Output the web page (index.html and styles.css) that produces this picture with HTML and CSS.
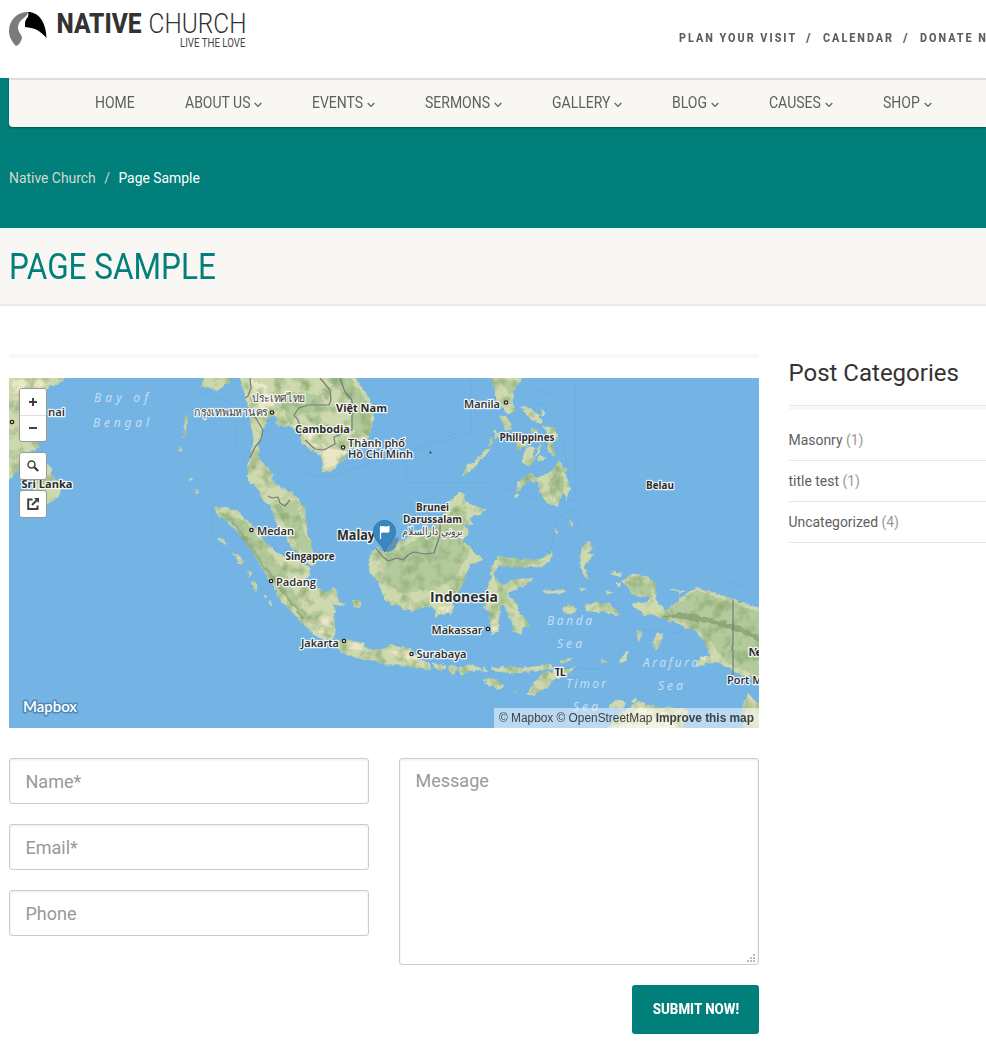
FILE: index.html
```html
<!DOCTYPE html>
<html lang="en">
<head>
<meta charset="utf-8">
<title>Page Sample</title>
<link rel="stylesheet" href="styles.css">
</head>
<body>
<header class="top">
  <svg class="logo" width="240" height="42" viewBox="9 8 240 42" role="img" aria-label="Native Church">
    <path fill="#7b7b7b" d="M28 12C17 12 9 20 9 31c0 6 3 11 7 15 3-1 5-4 6-8 0-3-4-6-4-10 0-5 3-8 7-11 2-2 3-3 3-5z"/>
    <path fill="#000" d="M28 12c10 0 18 9 18.500 26C40 31 36 28 25 27c0-5 0-7 3-10 0-2 1-3 0-5z"/>
    <text class="logo-bold" x="56.500" y="32.500" textLength="85" lengthAdjust="spacingAndGlyphs">NATIVE</text>
    <text class="logo-light" x="148.500" y="32.500" textLength="98" lengthAdjust="spacingAndGlyphs">CHURCH</text>
    <text class="logo-tag" x="180" y="47.300" textLength="65.500" lengthAdjust="spacingAndGlyphs">LIVE THE LOVE</text>
  </svg>
  <nav class="toplinks">
    <a class="tl1"><span>PLAN YOUR VISIT</span></a><i>/</i>
    <a class="tl2"><span>CALENDAR</span></a><i>/</i>
    <a class="tl3"><span>DONATE NOW</span></a>
  </nav>
</header>

<section class="hero">
  <nav class="mainnav">
    <a><span>HOME</span></a>
    <a><span>ABOUT US</span><svg viewBox="0 0 8 6"><path d="M.7 1 4 4.300 7.300 1"/></svg></a>
    <a><span>EVENTS</span><svg viewBox="0 0 8 6"><path d="M.7 1 4 4.300 7.300 1"/></svg></a>
    <a><span>SERMONS</span><svg viewBox="0 0 8 6"><path d="M.7 1 4 4.300 7.300 1"/></svg></a>
    <a><span>GALLERY</span><svg viewBox="0 0 8 6"><path d="M.7 1 4 4.300 7.300 1"/></svg></a>
    <a><span>BLOG</span><svg viewBox="0 0 8 6"><path d="M.7 1 4 4.300 7.300 1"/></svg></a>
    <a><span>CAUSES</span><svg viewBox="0 0 8 6"><path d="M.7 1 4 4.300 7.300 1"/></svg></a>
    <a><span>SHOP</span><svg viewBox="0 0 8 6"><path d="M.7 1 4 4.300 7.300 1"/></svg></a>
  </nav>
  <div class="crumbs"><a>Native Church</a><i>/</i><b>Page Sample</b></div>
</section>

<section class="title"><h1>PAGE SAMPLE</h1></section>

<main class="content">
  <div class="primary">
    <div class="rule"></div>
    <div class="map">
      <svg class="mapart" viewBox="9 378 750 350">
        <defs>
          <filter id="terrain" filterUnits="userSpaceOnUse" x="0" y="370" width="770" height="370" color-interpolation-filters="sRGB">
            <feTurbulence type="fractalNoise" baseFrequency=".18" numOctaves="3" seed="4" result="edge"/>
            <feDisplacementMap in="SourceGraphic" in2="edge" scale="5" xChannelSelector="R" yChannelSelector="G" result="land"/>
            <feTurbulence type="fractalNoise" baseFrequency=".08" numOctaves="4" seed="9"/>
            <feColorMatrix values="0 0 0 0 .52  0 0 0 0 .65  0 0 0 0 .43  2 0 0 0 -.9"/>
            <feComposite in2="land" operator="in" result="s"/>
            <feMerge><feMergeNode in="land"/><feMergeNode in="s"/></feMerge>
          </filter>
        </defs>
        <rect x="9" y="378" width="750" height="350" fill="#73b4e5"/>
        <g class="maritime">
          <path d="M199 391 230 402 240 410M237 420V450L246 460M471 378V433L406 453V483H493L540 500H575V378M528 385 548 394 574 380M530 402 545 405 562 440 569 475M212 507V540L226 555M575 507 556 520 550 555M575 507 577 525 595 545M290 455C300 480 330 480 350 470L460 432M500 668 600 669 645 630 680 633 700 590M720 580 740 585 759 590"/>
        </g>
        <g filter="url(#terrain)">
          <g class="land">
            <path d="M0 370H68L63 381 52 385 44 390 38 397 36 415 38 435 37 448 30 452 21 456 17 470 12 477 0 479Z"/>
            <path d="M37 458 46 460 51 470 55 480 61 487 58 497 49 503 38 501 33 485Z"/>
            <path d="M201 386 204 372H234L229 381 224 385 218 390Z"/>
            <path d="M238 370 243 386 246 396 249 410 252 425 254 440 252 452 249 464 247 475 248 481 252 485 254 482 258 490 264 500 271 506 275 520 281 530 286 538 292 547 301 558 312 565 318 560 313 550 309 540 306 525 305 510 298 498 286 490 279 488 272 480 270 470 264 465 259 459 258 448 261 436 264 428 266 418 277 415 277 426 290 425 298 432 302 441 308 449 315 450 321 455 323 464 322 472 331 470 344 460 347 450 357 445 368 440 371 428 374 418 372 405 366 393 358 383 352 370Z"/>
            <path d="M213 507 223 508 238 511 245 520 252 524 263 540 273 550 286 558 303 562 309 568 310 575 305 580 313 587 321 590 328 597 334 606 334 622 334 638 325 640 315 635 303 624 294 613 285 605 277 594 271 581 265 571 257 560 252 550 247 542 236 531 228 521 220 516Z"/>
            <path d="M325 592 333 588 337 592 338 600 345 604 340 607 333 603ZM353 600 360 601 361 606 354 607Z"/>
            <path d="M233 553 239 556 244 563 240 564ZM251 582 255 582 258 591 254 590ZM248 571 251 572 249 578ZM218 538 226 541 227 544 221 542ZM265 594 268 597 266 598ZM270 600 273 605 271 606Z"/>
            <path d="M186 415 188 417 185 432 183 438ZM181 446 182 450 180 450ZM195 488 198 493 196 494ZM190 477 192 479 190 480Z"/>
            <path d="M331 643 340 640 349 640 363 644 366 649 380 650 387 648 391 645 402 648 413 650 417 658 429 663 431 669 418 668 401 665 386 665 372 660 358 658 345 654 340 650Z"/>
            <path d="M432 664 443 664 446 668 438 670ZM449 666 457 667 454 673 449 671ZM460 667 470 665 480 668 482 671 471 670 462 674 457 671ZM483 667 488 671 484 672ZM492 668 510 667 522 668 515 673 495 671ZM525 668 550 665 553 668 530 671ZM483 680 495 679 504 687 500 689 490 685Z"/>
            <path d="M460 492 464 495 465 503 475 506 486 510 478 514 469 518 472 524 465 526 468 533 463 541 471 549 482 560 470 564 464 580 459 590 451 600 453 605 451 616 448 608 444 612 436 617 434 606 426 606 415 610 403 610 399 605 391 605 387 601 382 592 380 582 372 575 369 565 371 555 377 547 385 553 394 553 396 545 411 537 426 530 436 525 445 512 448 503 455 497Z"/>
            <path d="M492 565 500 557 510 558 531 562 541 560 553 551 551 560 541 567 520 566 504 564 497 566 494 575 497 586 505 585 511 582 520 580 533 579 525 585 514 590 507 593 511 597 517 605 519 612 525 618 529 626 522 628 521 634 514 631 512 622 506 610 504 603 500 605 499 615 498 632 492 634 490 620 490 612 483 607 489 600 487 588 491 578Z"/>
            <path d="M462 475 468 465 477 460 485 450 491 449 480 460 470 471ZM491 370H522L519 384 513 390 512 402 515 411 508 413 501 407 497 400 494 385ZM500 416 508 417 512 428 506 430ZM520 407 530 408 539 415 542 424 533 420 524 411ZM543 427 555 428 557 440 549 438ZM517 439 529 435 526 445 517 450ZM527 446 534 448 532 460 530 466 522 462ZM541 444 536 457 533 462 538 448ZM540 456 546 458 538 461ZM548 441 552 443 555 456 549 452ZM495 430 500 436 494 438ZM490 438 493 442 490 446ZM542 410 545 414 541 415ZM532 428 537 432 532 434Z"/>
            <path d="M558 460 565 468 566 478 570 488 566 500 563 490 557 506 547 503 540 492 539 482 526 481 519 490 517 493 518 483 530 474 538 478 548 474 555 468ZM515 494 519 496 516 498Z"/>
            <path d="M580 558 581 549 590 541 593 548 586 554 594 554 590 560 584 565 588 579 584 576 581 566ZM570 520 573 524 570 526ZM556 528 558 532 556 533Z"/>
            <path d="M544 590 564 591 564 593 545 593ZM563 608 570 605 577 608 572 614 565 613ZM584 606 595 603 610 604 616 610 618 615 607 612 588 611ZM580 587 586 590 580 591ZM605 592 612 592 608 595ZM611 572 622 573 621 576 612 575ZM615 583 621 582 619 587ZM670 590 684 592 680 593ZM637 631 643 632 638 641ZM657 633 662 635 660 645 656 650 654 641ZM620 658 627 652 626 660 621 663ZM601 660 607 662 602 663ZM560 661 572 659 566 663Z"/>
            <path d="M527 694 535 681 545 673 556 670 576 667 568 673 555 680 547 687 533 695ZM500 668 530 669 528 672 502 671ZM514 691 518 690 516 692Z"/>
            <path d="M609 705 617 700 625 703 622 707 612 708ZM630 701 637 699 634 703Z"/>
            <path d="M622 581 632 575 648 577 655 583 655 598 660 605 665 611 676 603 684 595 697 588 716 594 734 600 747 605 770 610V680L741 675 729 668 718 662 706 662 696 667 699 658 711 655 707 645 703 640 697 632 685 627 672 621 660 618 652 613 645 617 640 611 631 604 646 603 652 597 641 596 632 594 628 586Z"/>
            <path d="M607 730 620 714 637 702 655 707 670 708 688 710 680 735ZM744 735 743 705 749 694 755 702 761 710V735Z"/>
          </g>
          <g fill="#b3ca9c">
            <path d="M280 400 292 392 320 395 328 410 300 414 290 425ZM325 378 350 378 370 405 370 435 352 430 350 400Z"/>
            <path d="M274 505 297 500 303 530 314 550 306 558 290 535ZM220 511 245 521 280 565 299 600 308 618 278 590 250 545Z"/>
            <path d="M387 554 428 533 455 508 467 512 460 540 470 552 456 576 434 590 400 593 382 578ZM492 565 535 564 515 568 500 566ZM494 575 506 590 514 610 500 600ZM502 557 545 561 535 565 505 564Z"/>
            <path d="M625 581 650 583 652 597 633 592ZM665 613 697 590 759 612V676L730 665 704 635ZM548 480 565 475 563 495 550 490ZM500 380 518 380 510 395Z"/>
          </g>
          <g fill="#ebe6c5">
            <path d="M323 447 348 452 338 463 323 472ZM319 615 333 616 333 635 319 632ZM437 607 450 606 449 613 438 615ZM491 614 498 614 497 631 492 632ZM618 718 642 707 670 712 678 733H610ZM699 656 710 656 706 662ZM347 641 362 645 364 651 349 648ZM390 651 413 652 418 660 399 659ZM12 380 50 380 36 394 33 410 14 405ZM250 380 265 385 275 405 262 412ZM300 430 318 434 325 447 308 446Z"/>
          </g>
          <path d="M660 617C690 620 720 622 759 641L758 635C720 617 700 617 680 612Z" fill="#8fa77b"/>
          <path d="M230 518 265 568 304 619" fill="none" stroke="#9cb388" stroke-width="3"/>
        </g>
        <g class="border">
          <path d="M245 398 248 396 251 388 250 378M250 410 257 420 263 430 261 440 255 447 250 458M268 496 272 498 278 497 280 503 285 506 290 500M320 378 330 390 331 400 329 405 316 405 308 405 299 408 294 415 298 420 301 430 300 436M305 440 315 449 324 450 335 444 334 437 352 430 352 400 345 392 340 378M376 548 382 556 388 561 397 558 403 560 408 555 414 552 425 554 434 553 437 544 440 535 440 523"/>
          <path d="M733 600V645L732 648 733 651V675"/>
        </g>
        <g class="city">
          <circle cx="12" cy="422" r="1.700"/><circle cx="272" cy="412.500" r="1.700"/><circle cx="343" cy="447.500" r="1.700"/><circle cx="506" cy="402.500" r="1.700"/><circle cx="251.500" cy="530" r="1.700"/><circle cx="271" cy="581" r="1.700"/><circle cx="344" cy="641" r="1.700"/><circle cx="411.500" cy="654" r="1.700"/><circle cx="488" cy="629" r="1.700"/><circle cx="430.500" cy="452.500" r=".3"/>
        </g>
        <g class="sea">
          <text x="94" y="401.500" textLength="54">Bay of</text>
          <text x="93" y="427" textLength="56">Bengal</text>
          <text x="547" y="625" textLength="45">Banda</text>
          <text x="557" y="648" textLength="25">Sea</text>
          <text x="643" y="667" textLength="55">Arafura</text>
          <text x="658" y="690" textLength="25">Sea</text>
          <text x="566" y="688" textLength="40">Timor</text>
          <text x="573" y="711" textLength="25">Sea</text>
        </g>
        <g class="place">
          <text x="48" y="416" textLength="17">nai</text>
          <text class="thai" x="252" y="402" textLength="53" lengthAdjust="spacingAndGlyphs">ประเทศไทย</text>
          <text class="thai" x="194" y="416" textLength="74" lengthAdjust="spacingAndGlyphs">กรุงเทพมหานคร</text>
          <text x="348" y="446.500" textLength="57" lengthAdjust="spacingAndGlyphs">Thành phố</text>
          <text x="348" y="458" textLength="65" lengthAdjust="spacingAndGlyphs">Hồ Chí Minh</text>
          <text x="464" y="407.500" textLength="36" lengthAdjust="spacingAndGlyphs">Manila</text>
          <text x="257" y="535" textLength="37" lengthAdjust="spacingAndGlyphs">Medan</text>
          <text x="276" y="586" textLength="40" lengthAdjust="spacingAndGlyphs">Padang</text>
          <text x="301" y="646.500" textLength="38" lengthAdjust="spacingAndGlyphs">Jakarta</text>
          <text x="416.500" y="658" textLength="50" lengthAdjust="spacingAndGlyphs">Surabaya</text>
          <text x="431.500" y="634" textLength="51" lengthAdjust="spacingAndGlyphs">Makassar</text>
          <text x="727" y="684" textLength="42" lengthAdjust="spacingAndGlyphs">Port Mo</text>
          <text class="arab" x="402" y="535" textLength="61" lengthAdjust="spacingAndGlyphs">بروني دارالسلام</text>
          <g class="country">
            <text x="21.500" y="488" textLength="51" lengthAdjust="spacingAndGlyphs">Sri Lanka</text>
            <text x="336" y="411.500" textLength="51" lengthAdjust="spacingAndGlyphs">Việt Nam</text>
            <text x="295" y="432.500" textLength="55" lengthAdjust="spacingAndGlyphs">Cambodia</text>
            <text x="499.500" y="440.500" textLength="55" lengthAdjust="spacingAndGlyphs">Philippines</text>
            <text x="646" y="489" textLength="28" lengthAdjust="spacingAndGlyphs">Belau</text>
            <text x="416" y="511" textLength="33" lengthAdjust="spacingAndGlyphs">Brunei</text>
            <text x="403" y="523" textLength="59" lengthAdjust="spacingAndGlyphs">Darussalam</text>
            <text x="285.500" y="559.500" textLength="49" lengthAdjust="spacingAndGlyphs">Singapore</text>
            <text x="554.500" y="676" textLength="11.500">TL</text>
            <text x="748.500" y="656" textLength="21">New</text>
            <text class="big" x="337" y="540" textLength="38" lengthAdjust="spacingAndGlyphs">Malay</text>
            <text class="big" x="430" y="602" textLength="68" lengthAdjust="spacingAndGlyphs">Indonesia</text>
          </g>
        </g>
        <path d="M383 551C387 543 392 539 398 537 400 543 395 550 388 552Z" fill="#456b82" opacity=".45"/>
        <path d="M384.500 551.500C382 544 373.500 540.500 373.500 531.500a11 11 0 0 1 22 0C395.500 540.500 387 544 384.500 551.500Z" fill="#3887be" stroke="#3378a9"/>
        <path d="M380.500 539V526" fill="none" stroke="#fff" stroke-width="1.200"/>
        <path d="M380.500 527C383 524.500 385 528 389.500 525.500V532C386 534 384 531 380.500 533.500Z" fill="#fff"/>
        <text class="mapbox" x="23" y="712" textLength="54" lengthAdjust="spacingAndGlyphs">Mapbox</text>
      </svg>
      <div class="controls">
        <div class="zoomer">
          <button><svg viewBox="0 0 26 26"><path d="M13 9v8M9 13h8" stroke-width="2"/></svg></button>
          <button><svg viewBox="0 0 26 26"><path d="M9 12h8" stroke-width="2"/></svg></button>
        </div>
        <button class="single"><svg viewBox="0 0 26 26"><circle cx="11.500" cy="11.500" r="3.500" stroke-width="1.500"/><path d="M14.200 14.200 18.200 18" stroke-width="2.300"/></svg></button>
        <button class="single"><svg viewBox="0 0 26 26"><path d="M12.500 8.500H8.200V18H17.500V14.500" stroke-width="2"/><path d="M12 14 17 9" stroke-width="2"/><path d="M14 7H19V12Z" fill="#404040" stroke="none"/></svg></button>
      </div>
      <div class="attrib"><span>© Mapbox © OpenStreetMap <b>Improve this map</b></span></div>
    </div>
    <form class="contact">
      <div class="fields">
        <input placeholder="Name*"><input placeholder="Email*"><input placeholder="Phone">
      </div>
      <div class="msg">
        <textarea placeholder="Message"></textarea>
        <svg class="grip" viewBox="0 0 8 8"><path d="M6 0h2v2H6zM3 3h2v2H3zM6 3h2v2H6zM0 6h2v2H0zM3 6h2v2H3zM6 6h2v2H6z"/></svg>
      </div>
      <button class="submit" type="button"><span>SUBMIT NOW!</span></button>
    </form>
  </div>
  <aside class="side">
    <h3>Post Categories</h3>
    <ul>
      <li><a>Masonry</a> (1)</li>
      <li><a>title test</a> (1)</li>
      <li><a>Uncategorized</a> (4)</li>
    </ul>
  </aside>
</main>
</body>
</html>
```
FILE: styles.css
```css
* { box-sizing: border-box; }
html { overflow: hidden; }
body { margin: 0; width: 986px; height: 1051px; overflow: hidden; background: #fff; font-family: Roboto, "Liberation Sans", sans-serif; font-size: 14px; color: #5e5e5e; }
i { font-style: normal; }
button { font: inherit; padding: 0; border: 0; }

.top { height: 78px; display: flex; justify-content: space-between; align-items: flex-start; padding: 8px 0 0 9px; }
.logo { flex: none; overflow: visible; }
.logo-bold { font-size: 28.500px; font-weight: 800; fill: #333; }
.logo-light { font-size: 28.500px; font-weight: 350; fill: #333; }
.logo-tag { font-size: 12px; fill: #444; }

.toplinks { display: flex; width: 307px; margin-top: 20px; line-height: 20px; font-size: 12.500px; font-weight: 800; letter-spacing: 2.300px; white-space: nowrap; }
.toplinks a { flex: none; }
.toplinks span { display: inline-block; transform: scaleX(.865); transform-origin: 0 50%; }
.toplinks i { width: 17px; flex: none; }
.tl1 { width: 127px; }
.tl2 { width: 80px; }

.hero { height: 150px; background: #007f7b; padding-left: 9px; }
.mainnav { height: 49px; padding-left: 86px; display: grid; grid-template-columns: 89.500px 127.500px 113px 127px 120px 97px 114px 99px; background: #f8f7f3; border-top: 2px solid #dddcd8; border-bottom-left-radius: 4px; box-shadow: 0 1px 2px rgba(0,0,0,.35); }
.mainnav a { display: flex; align-items: center; margin-right: 50px; padding-bottom: 2px; font-size: 16px; font-weight: 450; white-space: nowrap; }
.mainnav span { flex: none; width: 0; transform: scaleX(.875); transform-origin: 0 50%; }
.mainnav svg { width: 8px; height: 6px; margin-left: auto; margin-top: 5px; fill: none; stroke: #5e5e5e; stroke-width: 1.200; flex: none; }
.crumbs { padding-top: 41px; line-height: 20px; font-size: 13.900px; color: #d5d8cf; }
.crumbs i { margin: 0 8.500px; }
.crumbs b { font-weight: 400; color: #fff; }

.title { height: 78px; padding-left: 9px; background: #f8f7f3; border-bottom: 2px solid #ecebe9; }
.title h1 { margin: 0; font-weight: 400; font-size: 36px; line-height: 78px; color: #007f7b; transform: scaleX(.875); transform-origin: 0 50%; white-space: nowrap; }

.content { display: flex; gap: 29.500px; padding: 48px 0 0 9px; }
.primary { width: 750px; flex: none; }
.rule { height: 4px; background: #f8f7f3; margin-bottom: 20px; }
.map { position: relative; width: 750px; height: 350px; overflow: hidden; }
.mapart { display: block; width: 750px; height: 350px; }
.land { fill: #cfd9ae; stroke: #cfd9ae; stroke-width: .8; }
.maritime { fill: none; stroke: #5f9fd3; stroke-width: .6; opacity: .45; }
.border { fill: none; stroke: #747b79; stroke-width: 1.200; stroke-linejoin: round; }
.city { fill: #eee; stroke: #222; stroke-width: 1.300; }
.sea { font: italic 12px "Noto Sans", sans-serif; fill: #c4def3; }
.place { font: 600 11.500px "Open Sans", "Noto Sans", sans-serif; fill: #2c2c2c; stroke: rgba(255,255,255,.85); stroke-width: 2.600px; stroke-linejoin: round; paint-order: stroke; }
.country { font-size: 11px; font-weight: 700; }
.big { font-size: 13.500px; }
.thai, .arab { font-weight: 400; font-size: 11px; fill: #444; }
.mapbox { font: 600 15px Lato, sans-serif; fill: #fff; stroke: #4e88b6; stroke-width: 3px; stroke-linejoin: round; paint-order: stroke; }

.controls { position: absolute; left: 10px; top: 10px; display: flex; flex-direction: column; gap: 10px; }
.controls button { width: 26px; height: 26px; background: #fff; display: block; }
.controls svg { display: block; width: 26px; height: 26px; fill: none; stroke: #404040; }
.zoomer, .controls .single { border: 1px solid #999; border-radius: 3px; width: 28px; overflow: hidden; }
.controls .single { height: 28px; }
.zoomer { height: 54px; }
.zoomer button + button { border-top: 1px solid #ddd; }
.attrib { position: absolute; right: 0; bottom: 0; width: 265px; height: 20px; padding-left: 5px; font: 12px/20px "Liberation Sans", sans-serif; color: #404040; background: rgba(255,255,255,.5); white-space: nowrap; }
.attrib span { display: inline-block; transform: scaleX(.989); transform-origin: 0 50%; }

.contact { display: grid; grid-template-columns: 360px 360px; column-gap: 30px; margin-top: 30px; }
.fields { display: flex; flex-direction: column; gap: 20px; }
input, textarea { display: block; width: 360px; height: 46px; margin: 0; padding: 10px 15.500px; border: 1px solid #ccc; border-radius: 3px; font: 18px/24px Roboto, sans-serif; box-shadow: inset 0 1px 3px rgba(0,0,0,.08); outline: none; }
textarea { height: 207px; resize: none; }
::placeholder { color: #999; opacity: 1; }
.msg { position: relative; }
.grip { position: absolute; right: 4px; bottom: 3px; width: 8px; height: 8px; fill: #bbb; }
.submit { grid-column: 2; justify-self: end; width: 127px; height: 49px; margin-top: 20px; border-radius: 3px; background: #007f7b; color: #fff; font-weight: 800; font-size: 14.500px; white-space: nowrap; }
.submit span { display: inline-block; transform: scaleX(.92); }

.side { width: 230px; flex: none; }
.side h3 { margin: 0; height: 56px; padding-top: 4px; font-weight: 400; font-size: 24px; line-height: 30px; color: #333; border-bottom: 4px solid #f8f7f3; box-shadow: inset 0 -1px #eae9e5; }
.side ul { list-style: none; margin: 10px 0 0; padding: 0; }
.side li { height: 41px; line-height: 40px; font-size: 13.950px; border-bottom: 1px solid #e8e7e4; color: #999; }
.side a { color: #5e5e5e; }
```
